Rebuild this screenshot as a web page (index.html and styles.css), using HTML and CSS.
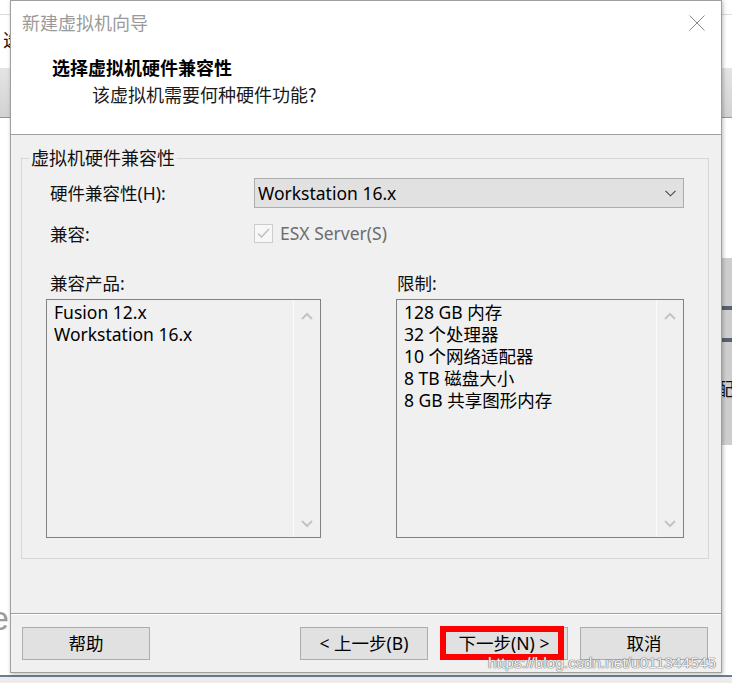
FILE: index.html
```html
<!DOCTYPE html>
<html lang="zh-CN">
<head>
<meta charset="utf-8">
<title>新建虚拟机向导</title>
<link rel="stylesheet" href="styles.css">
</head>
<body>
<div class="desktop">
  <div class="bg-topline"></div>
  <div class="bg-char-left">选</div>
  <div class="bg-band"></div>
  <div class="bg-panel">
    <div class="bg-bar bg-bar-1"></div>
    <div class="bg-bar bg-bar-2"></div>
  </div>
  <div class="bg-char-right">配</div>
  <div class="bg-e">e</div>
  <div class="bg-bottom"></div>

  <div class="dialog">
    <div class="header">
      <div class="titlebar">
        <span class="title">新建虚拟机向导</span>
        <svg class="close" width="16" height="16" viewBox="0 0 16 16"><path d="M0.5 0.5 L15.5 15.5 M15.5 0.5 L0.5 15.5" stroke="#8c8c8c" stroke-width="1" fill="none"/></svg>
      </div>
      <div class="heading">选择虚拟机硬件兼容性</div>
      <div class="subheading">该虚拟机需要何种硬件功能?</div>
    </div>

    <div class="body">
      <div class="group">
        <div class="legend">虚拟机硬件兼容性</div>
        <div class="row row-hw">
          <span class="label">硬件兼容性(H):</span>
          <div class="select">
            <span class="select-text">Workstation 16.x</span>
            <svg class="chev" width="11" height="7" viewBox="0 0 11 7"><polyline points="0.5,0.8 5.5,5.8 10.5,0.8" stroke="#444" stroke-width="1.1" fill="none"/></svg>
          </div>
        </div>
        <div class="row row-compat">
          <span class="label">兼容:</span>
          <div class="check-wrap">
            <span class="checkbox"><svg width="17" height="17" viewBox="0 0 17 17"><polyline points="3,8.5 6.5,12 14,4" stroke="#bdbdbd" stroke-width="1.4" fill="none"/></svg></span>
            <span class="check-label">ESX Server(S)</span>
          </div>
        </div>
        <div class="lists">
          <span class="list-label list-label-left">兼容产品:</span>
          <span class="list-label list-label-right">限制:</span>
          <div class="listbox listbox-left">
            <div class="items">
              <div class="item">Fusion 12.x</div>
              <div class="item">Workstation 16.x</div>
            </div>
            <div class="scrollbar">
              <svg width="12" height="8" viewBox="0 0 12 8"><polyline points="1,7 6,2 11,7" stroke="#c4c4c4" stroke-width="2" fill="none"/></svg>
              <svg width="12" height="8" viewBox="0 0 12 8"><polyline points="1,1 6,6 11,1" stroke="#c4c4c4" stroke-width="2" fill="none"/></svg>
            </div>
          </div>
          <div class="listbox listbox-right">
            <div class="items">
              <div class="item">128 GB 内存</div>
              <div class="item">32 个处理器</div>
              <div class="item">10 个网络适配器</div>
              <div class="item">8 TB 磁盘大小</div>
              <div class="item">8 GB 共享图形内存</div>
            </div>
            <div class="scrollbar">
              <svg width="12" height="8" viewBox="0 0 12 8"><polyline points="1,7 6,2 11,7" stroke="#c4c4c4" stroke-width="2" fill="none"/></svg>
              <svg width="12" height="8" viewBox="0 0 12 8"><polyline points="1,1 6,6 11,1" stroke="#c4c4c4" stroke-width="2" fill="none"/></svg>
            </div>
          </div>
        </div>
      </div>
    </div>

    <div class="footer">
      <button class="btn">帮助</button>
      <div class="btn-group">
        <button class="btn">&lt; 上一步(B)</button>
        <button class="btn btn-next">下一步(N) &gt;<span class="highlight"></span></button>
        <button class="btn">取消</button>
      </div>
    </div>
  </div>

  <div class="watermark">https://blog.csdn.net/u011344545</div>
</div>
</body>
</html>
```

FILE: styles.css
```css
html, body {
  margin: 0;
  padding: 0;
}

body {
  width: 732px;
  height: 683px;
  overflow: hidden;
  background: #ffffff;
  font-family: "Noto Sans", "Noto Sans CJK SC", sans-serif;
  font-size: 17.5px;
  color: #000;
}

.desktop {
  position: relative;
  width: 732px;
  height: 683px;
  overflow: hidden;
  background: #ffffff;
}

/* background application behind the dialog */
.bg-topline {
  position: absolute;
  left: 0;
  top: 14px;
  width: 732px;
  height: 1px;
  background: #dcdcdc;
}

.bg-char-left {
  position: absolute;
  left: 3px;
  top: 27px;
  font-family: "Noto Sans CJK SC", sans-serif;
  font-size: 18px;
  line-height: 24px;
  color: #111;
}

.bg-band {
  position: absolute;
  left: 0;
  top: 68px;
  width: 732px;
  height: 49px;
  background: linear-gradient(#e4e4e4, #d2d2d2);
  border-bottom: 1px solid #7b9cba;
}

.bg-panel {
  position: absolute;
  left: 700px;
  top: 258px;
  width: 32px;
  height: 187px;
  background: linear-gradient(90deg, #d8d8d8, #cdcdcd);
}

.bg-bar {
  position: absolute;
  left: 0;
  width: 32px;
  height: 4px;
  background: #56626e;
}

.bg-bar-1 { top: 48px; }
.bg-bar-2 { top: 80px; }

.bg-char-right {
  position: absolute;
  left: 716px;
  top: 376px;
  font-family: "Noto Sans CJK SC", sans-serif;
  font-size: 18px;
  line-height: 24px;
  color: #111;
}

.bg-e {
  position: absolute;
  left: -10px;
  top: 598px;
  font-family: "Liberation Sans", sans-serif;
  font-size: 34px;
  line-height: 40px;
  color: #9b9b9b;
}

.bg-bottom {
  position: absolute;
  left: 0;
  top: 675px;
  width: 732px;
  height: 8px;
  background: #ececec;
  border-top: 2px solid #6b7d8e;
}

/* dialog window */
.dialog {
  position: absolute;
  left: 10px;
  top: 0;
  width: 712px;
  height: 673px;
  box-sizing: border-box;
  border: 1px solid #9f9f9f;
  background: #f0f0f0;
  box-shadow: 1px 1px 4px rgba(0, 0, 0, 0.28);
  display: flex;
  flex-direction: column;
}

.header {
  height: 133px;
  border-bottom: 1px solid #a0a0a0;
  background: #ffffff;
  flex: none;
}

.titlebar {
  height: 42px;
  display: flex;
  align-items: center;
  justify-content: space-between;
  padding: 0 16px 0 11px;
}

.title {
  font-family: "Noto Sans CJK SC", sans-serif;
  font-size: 18px;
  color: #9a9a9a;
  line-height: 40px;
}

.close {
  display: block;
  margin-top: 1px;
}

.heading {
  margin: 12px 0 0 41px;
  font-family: "Noto Sans CJK SC", sans-serif;
  font-weight: 700;
  font-size: 18px;
  line-height: 24px;
  color: #000;
}

.subheading {
  margin: 3px 0 0 81px;
  font-family: "Noto Sans CJK SC", sans-serif;
  font-size: 18px;
  line-height: 24px;
  color: #1a1a1a;
}

.body {
  height: 478px;
  flex: none;
  padding-top: 23px;
  box-sizing: border-box;
}

.group {
  margin: 0 12px 0 10px;
  height: 401px;
  box-sizing: border-box;
  border: 1px solid #d7d7d7;
}

.legend {
  display: block;
  width: max-content;
  margin: -13px 0 0 7px;
  padding: 0 2px;
  line-height: 24px;
  font-size: 18px;
  background: #f0f0f0;
  color: #111;
}

.row {
  display: flex;
  align-items: center;
  padding-left: 28px;
}

.row-hw {
  margin-top: 8px;
  height: 30px;
}

.row-compat {
  margin-top: 16px;
  height: 19px;
}

.label {
  width: 204px;
  flex: none;
  line-height: 18px;
  color: #111;
}

.select {
  width: 430px;
  height: 30px;
  box-sizing: border-box;
  border: 1px solid #adadad;
  background: #e1e1e1;
  display: flex;
  align-items: center;
  justify-content: space-between;
  padding: 0 7px 0 3px;
}

.select-text {
  line-height: 26px;
  color: #000;
}

.chev {
  display: block;
  margin-top: 1px;
}

.check-wrap {
  display: flex;
  align-items: center;
}

.checkbox {
  width: 19px;
  height: 19px;
  box-sizing: border-box;
  border: 1px solid #cccccc;
  background: #f7f7f7;
  display: flex;
  align-items: center;
  justify-content: center;
  margin-right: 7px;
}

.checkbox svg {
  display: block;
}

.check-label {
  line-height: 17px;
  color: #6d6d6d;
}

.lists {
  margin-top: 31px;
  padding-left: 24px;
  display: grid;
  grid-template-columns: 275px 288px;
  grid-template-rows: 20px 239px;
  column-gap: 75px;
  row-gap: 5px;
}

.list-label {
  line-height: 18px;
  color: #111;
}

.list-label-left { padding-left: 4px; }
.list-label-right { padding-left: 1px; }

.listbox {
  box-sizing: border-box;
  border: 1px solid #828282;
  background: #f0f0f0;
  display: flex;
}

.items {
  flex: 1;
  padding: 1px 0 0 7px;
}

.item {
  line-height: 22px;
  white-space: nowrap;
}

.scrollbar {
  width: 26px;
  flex: none;
  border-left: 1px solid #fbfbfb;
  display: flex;
  flex-direction: column;
  align-items: center;
  justify-content: space-between;
  padding: 12px 0 9px;
}

.scrollbar svg {
  display: block;
}

.footer {
  flex: 1;
  border-top: 1px solid #a0a0a0;
  box-shadow: inset 0 1px 0 #ffffff;
  display: flex;
  justify-content: space-between;
  align-items: flex-start;
  padding: 13px 13px 0 11px;
}

.btn-group {
  display: flex;
  gap: 12px;
}

.btn {
  position: relative;
  width: 128px;
  height: 33px;
  box-sizing: border-box;
  border: 1px solid #adadad;
  background: #e1e1e1;
  font-family: "Noto Sans", "Noto Sans CJK SC", sans-serif;
  font-size: 17.5px;
  line-height: 29px;
  color: #000;
  padding: 0;
  margin: 0;
}

.highlight {
  position: absolute;
  left: -1px;
  top: -2px;
  width: 124px;
  height: 34px;
  box-sizing: border-box;
  border: 6px solid #ff0000;
  pointer-events: none;
}

.watermark {
  position: absolute;
  left: 488px;
  top: 654px;
  font-family: "Liberation Sans", sans-serif;
  font-size: 15.5px;
  line-height: 18px;
  color: rgba(255, 255, 255, 0.92);
  text-shadow: 0 0 1px #6f6f6f, 0 0 1px #6f6f6f, 0 0 1px #6f6f6f;
  white-space: nowrap;
}
```
